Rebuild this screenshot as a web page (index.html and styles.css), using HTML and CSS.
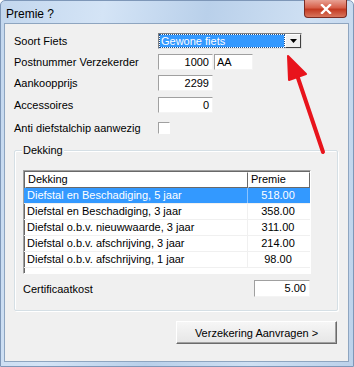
FILE: index.html
```html
<!DOCTYPE html>
<html>
<head>
<meta charset="utf-8">
<link rel="stylesheet" href="styles.css">
</head>
<body>
<div class="window">
  <div class="titlebar">
    <span class="title">Premie ?</span>
    <div class="close"><svg width="14" height="10" viewBox="0 0 14 10"><path d="M3 1 L11 9 M11 1 L3 9" stroke="#fff" stroke-width="2.4" stroke-linecap="square"/></svg></div>
  </div>
  <div class="client">
    <div class="form">
      <div class="row"><span class="label">Soort Fiets</span>
        <div class="combo"><span class="combo-text"><span class="sel">Gewone fiets</span></span><span class="combo-btn"><svg width="7" height="4" viewBox="0 0 7 4"><path d="M0 0 H7 L3.5 4 Z" fill="#000"/></svg></span></div>
      </div>
      <div class="row"><span class="label">Postnummer Verzekerder</span>
        <div class="input num w55">1000</div><div class="input w39">AA</div>
      </div>
      <div class="row"><span class="label">Aankoopprijs</span><div class="input num w55">2299</div></div>
      <div class="row"><span class="label">Accessoires</span><div class="input num w55">0</div></div>
      <div class="row"><span class="label">Anti diefstalchip aanwezig</span><div class="check"></div></div>
    </div>
    <div class="group">
      <span class="legend">Dekking</span>
      <div class="list">
        <div class="lrow head"><span class="c1">Dekking</span><span class="c2">Premie</span></div>
        <div class="lrow selected"><span class="c1">Diefstal en Beschadiging, 5 jaar</span><span class="c2">518.00</span></div>
        <div class="lrow"><span class="c1">Diefstal en Beschadiging, 3 jaar</span><span class="c2">358.00</span></div>
        <div class="lrow"><span class="c1">Diefstal o.b.v. nieuwwaarde, 3 jaar</span><span class="c2">311.00</span></div>
        <div class="lrow"><span class="c1">Diefstal o.b.v. afschrijving, 3 jaar</span><span class="c2">214.00</span></div>
        <div class="lrow"><span class="c1">Diefstal o.b.v. afschrijving, 1 jaar</span><span class="c2">98.00</span></div>
      </div>
      <div class="cert"><span class="label">Certificaatkost</span><div class="input num w56">5.00</div></div>
    </div>
    <div class="actions"><button class="btn">Verzekering Aanvragen &gt;</button></div>
  </div>
  <svg class="arrow" width="354" height="367" viewBox="0 0 354 367">
    <path d="M323 151 L297 74" stroke="#e8141c" stroke-width="4" stroke-linecap="round" fill="none"/>
    <path d="M288 55 L306 73 L289 79 Z" fill="#e8141c" stroke="#e8141c" stroke-width="2" stroke-linejoin="round"/>
  </svg>
</div>
</body>
</html>
```

FILE: styles.css
```css
* { box-sizing: border-box; }
html, body { margin: 0; padding: 0; }
body {
  width: 354px; height: 367px; overflow: hidden;
  font-family: "Liberation Sans", Arial, sans-serif;
  font-size: 11px; color: #000;
}
.window {
  position: relative;
  width: 354px; height: 367px;
  background: linear-gradient(100deg, #c3d7ee 0%, #d4e4f6 25%, #b9d0ea 50%, #cfe0f3 75%, #bcd2eb 100%);
  border: 1px solid #7e97b8;
  border-radius: 5px 5px 0 0;
  display: flex; flex-direction: column;
  padding: 0 4px 4px 3px;
}
.titlebar {
  height: 22px;
  display: flex; align-items: flex-start; justify-content: space-between;
}
.title {
  font-family: "Liberation Sans", Arial, sans-serif;
  font-size: 12px; margin: 6px 0 0 2px; color: #000;
}
.close {
  width: 43px; height: 18px;
  margin-top: -1px; margin-right: 2px;
  background: linear-gradient(#e8a193 0%, #d7604a 45%, #c33a22 55%, #d8755d 100%);
  border: 1px solid #7b2b22; border-top: none;
  border-radius: 0 0 4px 4px;
  display: flex; align-items: center; justify-content: center;
}
.client {
  flex: 1;
  background: #f0f0f0;
  border: 1px solid #8ea5c0;
  padding: 9px 11px 0 9px;
  display: flex; flex-direction: column;
}
.form { display: flex; flex-direction: column; gap: 5px; }
.row { display: flex; align-items: center; height: 16px; }
.row:nth-child(4) { margin-top: 1px; }
.row:nth-child(5) { margin-top: 2px; }
.label { width: 144px; flex: none; }
.combo {
  width: 144px; height: 16px;
  border: 1px solid #7a7a7a; border-color: #808080 #e0e0e0 #e0e0e0 #808080;
  background: #fff; display: flex;
}
.combo-text { flex: 1; padding: 1px; display: flex; }
.sel { flex: 1; background: #3399ff; color: #fff; line-height: 12px; padding-left: 1px; outline: 1px dotted #1a4f8f; }
.combo-btn {
  width: 16px; background: #f0f0f0;
  border: 1px solid; border-color: #fff #404040 #404040 #fff;
  display: flex; align-items: center; justify-content: center;
}
.input {
  height: 16px; background: #fff;
  border: 1px solid; border-color: #a0a0a0 #f4f4f4 #f4f4f4 #a0a0a0;
  line-height: 14px; padding: 0 3px;
}
.num { text-align: right; }
.w55 { width: 55px; }
.w56 { width: 56px; }
.w39 { width: 39px; margin-left: 1px; padding-left: 2px; }
.check {
  width: 12px; height: 12px; background: #fff;
  border: 1px solid; border-color: #a0a0a0 #fff #fff #a0a0a0;
}
.group {
  position: relative;
  margin-top: 14px;
  width: 324px; height: 161px;
  border: 1px solid #d5dfe5;
  box-shadow: 1px 1px 0 #fff inset, 1px 1px 0 #fff;
  border-radius: 2px;
  padding: 19px 0 0 8px;
}
.legend {
  position: absolute; left: 7px; top: -7px;
  background: #f0f0f0; padding: 0 1px;
}
.list {
  width: 288px; height: 104px;
  background: #fff;
  border: 1px solid; border-color: #a0a0a0 #fff #fff #a0a0a0;
  box-shadow: inset 1px 1px 0 #696969;
}
.lrow { display: flex; height: 16px; line-height: 15px; border-bottom: 1px solid #f0f0f0; }
.lrow .c1 { flex: none; width: 224px; padding-left: 3px; border-right: 1px solid #f0f0f0; white-space: nowrap; overflow: hidden; }
.lrow .c2 { flex: none; width: 62px; display: flex; justify-content: center; padding-right: 2px; }
.lrow.head { height: 16px; margin: 1px 0 0 1px; border-bottom: none; }
.lrow.head .c1 { border: 1px solid; border-color: #fff #696969 #696969 #fff; width: 223px; padding-left: 2px; line-height: 13px; }
.lrow.head .c2 { border: 1px solid; border-color: #fff #696969 #696969 #fff; justify-content: flex-start; padding-left: 2px; line-height: 13px; }
.lrow.selected { background: #3399ff; color: #fff; }
.lrow.selected .c1 { border-right-color: #8cc4ff; }
.cert { display: flex; align-items: center; justify-content: space-between; width: 287px; margin-top: 6px; }
.cert .input { height: 17px; }
.actions { display: flex; justify-content: flex-end; margin-top: 10px; padding-right: 0; }
.btn {
  width: 161px; height: 23px;
  font-family: "Liberation Sans", Arial, sans-serif; font-size: 11px;
  background: linear-gradient(#f6f6f6, #e6e6e6);
  border: 1px solid; border-color: #fff #6b6b6b #6b6b6b #fff;
  box-shadow: inset -1px -1px 0 #a0a0a0;
  padding: 0;
}
.arrow { position: absolute; left: -1px; top: 0; pointer-events: none; }
```
